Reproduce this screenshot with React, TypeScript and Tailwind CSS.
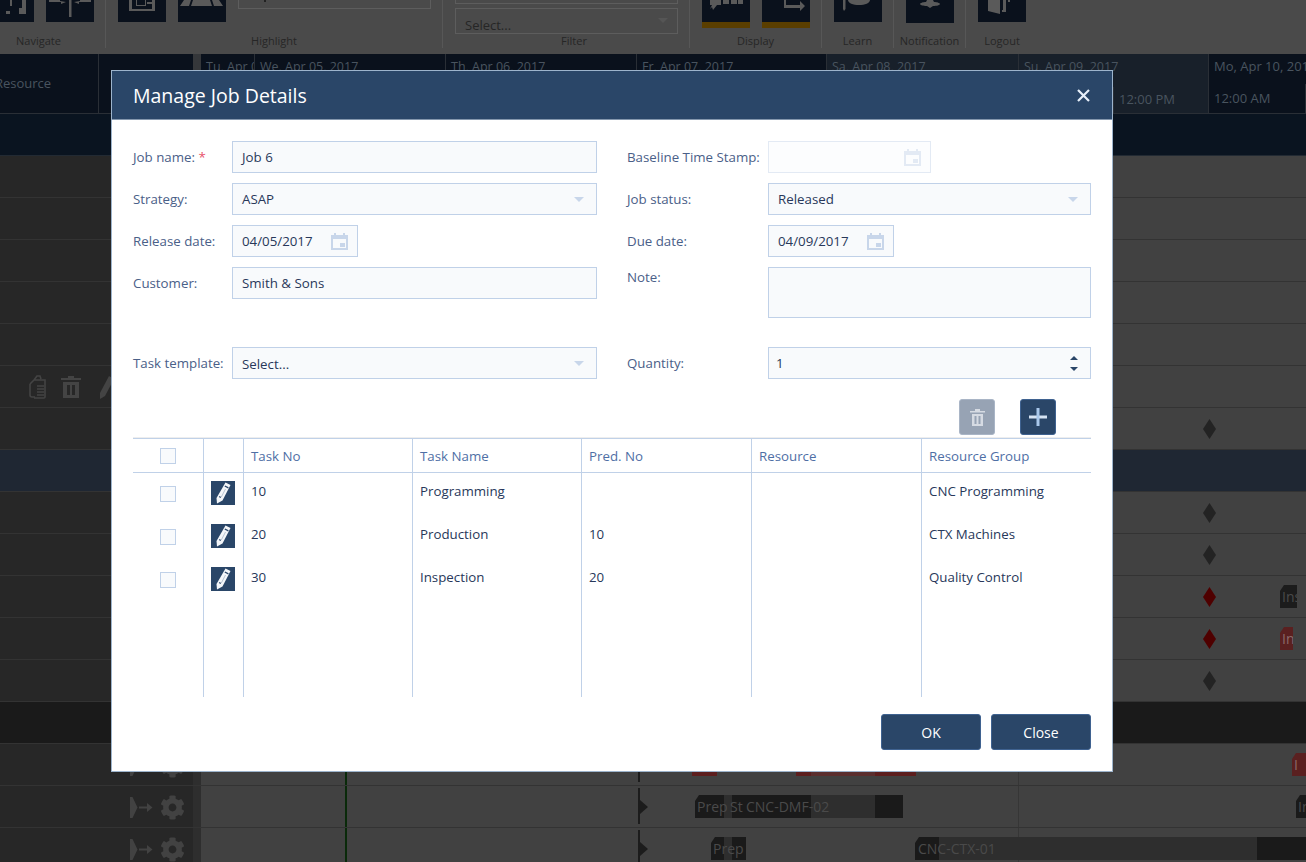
import type { ReactNode } from 'react'
import { FaCog } from 'react-icons/fa'

const HEADER_DAYS = [
	{ label: 'Tu, Apr 04, 2017', w: 'w-[54px]', bg: 'bg-[#0a111c]' },
	{ label: 'We, Apr 05, 2017', w: 'w-[191px]', bg: 'bg-[#0a111c]' },
	{ label: 'Th, Apr 06, 2017', w: 'w-[191px]', bg: 'bg-[#0a111c]' },
	{ label: 'Fr, Apr 07, 2017', w: 'w-[190px]', bg: 'bg-[#0a111c]' },
	{ label: 'Sa, Apr 08, 2017', w: 'w-[192px]', bg: 'bg-[#18202a]' },
]

const TASKS = [
	{ no: '10', name: 'Programming', pred: '', group: 'CNC Programming' },
	{ no: '20', name: 'Production', pred: '10', group: 'CTX Machines' },
	{ no: '30', name: 'Inspection', pred: '20', group: 'Quality Control' },
]

function ToolButton({ children, amber }: { children?: ReactNode; amber?: boolean }) {
	return (
		<div className="w-[48px] shrink-0">
			<div className="h-[22px] bg-[#0a111c] overflow-hidden">{children}</div>
			{amber && <div className="h-[6px] bg-[#5a3e00]" />}
		</div>
	)
}

function ToolGroup({ label, className, labelClass = '', children }: { label: string; className: string; labelClass?: string; children?: ReactNode }) {
	return (
		<div className={`h-[48px] shrink-0 flex flex-col border-r border-[#575757] ${className}`}>
			<div className="h-[34px] overflow-hidden">{children}</div>
			<div className={`text-center text-[11px] leading-[13px] text-[#262626] ${labelClass}`}>{label}</div>
		</div>
	)
}

function Toolbar() {
	return (
		<div className="h-[54px] bg-[#4a4a4a] flex overflow-hidden">
			<ToolGroup label="Navigate" className="w-[106px]" labelClass="pr-[28px]">
				<div className="flex gap-[12px] ml-[-14px]">
					<ToolButton>
						<svg width="48" height="22" viewBox="0 0 48 22" fill="#5a5a5a">
							<path d="M24 0h2v6h-2zM33 8h3V0h4v14h-7zM20 11h4v3h-4z" />
						</svg>
					</ToolButton>
					<ToolButton>
						<svg width="48" height="22" viewBox="0 0 48 22" fill="#5a5a5a">
							<path d="M23 0h2.5v17H23zM3 0h11v1l6 1-5 2v-2H3zM45 0H34v1l-6 1 5 2v-2h12z" />
						</svg>
					</ToolButton>
				</div>
			</ToolGroup>
			<ToolGroup label="Highlight" className="w-[337px]">
				<div className="flex pl-[12px] gap-[12px]">
					<ToolButton>
						<svg width="48" height="22" viewBox="0 0 48 22" fill="#5a5a5a">
							<path d="M11 0h3v9h20V0h3v11H11zM18 0h1v5h8V0h1v6H18z" />
							<path d="M29 2h5v2h-5z" />
						</svg>
					</ToolButton>
					<ToolButton>
						<svg width="48" height="22" viewBox="0 0 48 22" fill="#5a5a5a">
							<path d="M2 6l4-6h7l-2 6zM13 6l2-6h17l2 6zM36 6l-2-6h7l4 6z" />
						</svg>
					</ToolButton>
					<div className="relative h-[9px] w-[193px] border border-[#5d5d5d] border-t-0">
						<div className="absolute left-[25px] top-0 w-[2px] h-[2px] bg-[#222]" />
					</div>
				</div>
			</ToolGroup>
			<ToolGroup label="Filter" className="w-[247px]" labelClass="pl-[16px]">
				<div className="ml-[12px] w-[223px]">
					<div className="h-[4px] border border-t-0 border-[#5d5d5d]" />
					<div className="mt-[4px] h-[26px] border border-[#5d5d5d] flex items-start justify-between pl-[9px] pr-[9px] text-[13px] leading-[32px] text-[#262626]">
						Select...
						<span className="mt-[9px] w-0 h-0 border-x-[5px] border-x-transparent border-t-[5px] border-t-[#555]" />
					</div>
				</div>
			</ToolGroup>
			<ToolGroup label="Display" className="w-[132px]">
				<div className="flex gap-[12px] pl-[12px]">
					<ToolButton amber>
						<svg width="48" height="22" viewBox="0 0 48 22" fill="#5a5a5a">
							<path d="M8 0h11v5h-4l-4 5-1-3-2 2 2-4H8zM21 0h6v4h-6zM29 0h6v4h-6zM36 0h5v4h-5z" />
						</svg>
					</ToolButton>
					<ToolButton amber>
						<svg width="48" height="22" viewBox="0 0 48 22" fill="#5a5a5a">
							<path d="M22 0h2v5h14V1l5 5-5 5V8H22z" />
						</svg>
					</ToolButton>
				</div>
			</ToolGroup>
			<ToolGroup label="Learn" className="w-[72px]">
				<div className="pl-[12px]">
					<ToolButton>
						<svg width="48" height="22" viewBox="0 0 48 22" fill="#5a5a5a">
							<path d="M14 0h22c0 3-5 5-11 5S14 3 14 0zM9 0h2.5v9L10 11 9 9z" />
						</svg>
					</ToolButton>
				</div>
			</ToolGroup>
			<ToolGroup label="Notification" className="w-[72px]">
				<div className="pl-[12px]">
					<div className="w-[48px] h-[23px] bg-[#0a111c]">
						<svg width="48" height="12" viewBox="0 0 48 12" fill="#5a5a5a">
							<path d="M21 0h6l1 2c3 0 6 1 6 2s-3 2-7 2l-3 2-3-2c-4 0-7-1-7-2s3-2 6-2z" />
						</svg>
					</div>
				</div>
			</ToolGroup>
			<div className="w-[72px] shrink-0 h-[48px] flex flex-col">
				<div className="h-[34px] pl-[12px] overflow-hidden">
					<ToolButton>
						<svg width="48" height="22" viewBox="0 0 48 22" fill="#5a5a5a">
							<path d="M10 0h12v14l-12-3zM25 0h3v12h-4v-2h1zM30 0h2v2h-2z" />
						</svg>
					</ToolButton>
				</div>
				<div className="text-center text-[11px] leading-[13px] text-[#262626]">Logout</div>
			</div>
		</div>
	)
}

function TimeHeader() {
	return (
		<div className="h-[60px] flex bg-[#0a111c] border-b border-[#2a2f36] text-[#49545f] text-[13px]">
			<div className="w-[99px] shrink-0 border-r border-[#2a2f36] flex items-center overflow-hidden">
				<span className="ml-[-5px]">Resource</span>
			</div>
			<div className="w-[94px] shrink-0" />
			<div className="w-[8px] shrink-0 bg-[#35373a]" />
			{HEADER_DAYS.map((d) => (
				<div key={d.label} className={`${d.w} ${d.bg} shrink-0 overflow-hidden whitespace-nowrap text-[12.5px] pl-[5px] pt-[4px] border-r border-[#2a2f36]`}>
					{d.label}
				</div>
			))}
			<div className="w-[190px] shrink-0 bg-[#18202a] overflow-hidden whitespace-nowrap text-[12.5px] pt-[4px] border-r border-[#2a2f36]">
				<div className="pl-[5px]">Su, Apr 09, 2017</div>
				<div className="ml-[94px] mt-[10px] h-[29px] pl-[5px] pt-[3px] text-[13px] border-l border-[#2a2f36]">12:00 PM</div>
			</div>
			<div className="flex-1 overflow-hidden whitespace-nowrap pl-[5px] pt-[3px] relative">
				Mo, Apr 10, 2017
				<div className="mt-[12px]">12:00 AM</div>
				<div className="absolute right-0 bottom-0 h-[29px] w-[1px] bg-[#2a2f36]" />
			</div>
		</div>
	)
}

function Diamond({ red }: { red?: boolean }) {
	return (
		<svg className="absolute left-[1002px] top-[11px]" width="13" height="20" viewBox="0 0 13 20" fill={red ? '#4f0000' : '#232323'}>
			<path d="M6.5 0L13 10 6.5 20 0 10z" />
		</svg>
	)
}

function Marker() {
	return (
		<svg className="absolute left-[436px] top-[2px]" width="12" height="36" viewBox="0 0 12 36" fill="#1c1c1c">
			<path d="M1 0h2v12l8 7-8 7v10H1z" />
		</svg>
	)
}

function LinkIcons() {
	return (
		<div className="absolute left-[130px] top-[9px] flex items-center gap-[7px] text-[#424242]">
			<svg width="23" height="21" viewBox="0 0 23 21" fill="currentColor">
				<path d="M0 0h2.5l5 10.5-5 10.5H0zM9 9.5h8V6l5.5 4.5L17 15v-3.5H9z" />
			</svg>
			<FaCog size={25} />
		</div>
	)
}

function Row({ left, children, selected, band }: { left?: ReactNode; children?: ReactNode; selected?: boolean; band?: boolean }) {
	if (band) {
		return <div className="h-[42px] bg-[#1a1a1a] border-b border-[#333]" />
	}
	return (
		<div className={`h-[42px] flex border-b ${selected ? 'bg-[#1f2733] border-[#333]' : 'border-[#333]'}`}>
			<div className={`w-[193px] shrink-0 relative ${selected ? '' : 'bg-[#272727]'}`}>{left}</div>
			<div className={`w-[8px] shrink-0 ${selected ? '' : 'bg-[#2e2e2e]'}`} />
			<div className={`flex-1 relative overflow-hidden ${selected ? '' : 'bg-[#414141]'}`}>{children}</div>
		</div>
	)
}

function Bar({ className, text, textClass }: { className: string; text?: string; textClass?: string }) {
	return (
		<div className={`absolute h-[23px] overflow-hidden whitespace-nowrap text-[14px] leading-[23px] pl-[2px] [clip-path:polygon(4px_0,100%_0,100%_100%,0_100%,0_6px)] ${className}`}>
			<span className={textClass ?? 'text-[#4a4a4a]'}>{text}</span>
		</div>
	)
}

function ScheduleBackground() {
	const vline = <div className="absolute left-[144px] inset-y-0 w-[2px] bg-[#0a2a0a]" />
	const dayLine = <div className="absolute left-[817px] inset-y-0 w-[1px] bg-[#363636]" />

	return (
		<div>
			<div className="h-[42px] bg-[#0a1420] border-b border-[#222a33]" />
			<Row />
			<Row />
			<Row />
			<Row />
			<Row />
			<Row
				left={
					<div className="absolute left-[28px] top-[9px] flex items-center text-[#444]">
						<svg width="18" height="24" viewBox="0 0 18 24" fill="none" stroke="currentColor" strokeWidth="1.6">
							<path d="M6 5l3-4h3l1 3M2 9l4-4h6l5 0v17a1 1 0 0 1-1 1H6" />
							<path d="M2 9v11a2 2 0 0 0 2 2h3M9 11h7M9 14h7M9 17h7M9 20h7" />
						</svg>
						<svg className="ml-[15px]" width="20" height="24" viewBox="0 0 20 24" fill="currentColor">
							<path d="M0 3h7V1h6v2h7v2H0zM2 7h16v16H2zM6 10v10h3V10zM11 10v10h3V10z" />
						</svg>
						<svg className="ml-[19px]" width="14" height="24" viewBox="0 0 14 24" fill="currentColor">
							<path d="M9 1l5 3-9 17-5 3 0-6z" />
						</svg>
					</div>
				}
			/>
			<Row><Diamond /></Row>
			<Row selected />
			<Row><Diamond /></Row>
			<Row><Diamond /></Row>
			<Row>
				<Diamond red />
				<Bar className="left-[1079px] top-[9px] w-[17px] bg-[#1c1c1c]" text="Ins" />
			</Row>
			<Row>
				<Diamond red />
				<Bar className="left-[1079px] top-[9px] w-[13px] bg-[#5a2020]" text="In" textClass="text-[#8a6a6a]" />
			</Row>
			<Row><Diamond /></Row>
			<Row band />
			<Row left={<LinkIcons />}>
				{vline}
				{dayLine}
				<Marker />
				<Bar className="left-[491px] top-[9px] w-[25px] bg-[#5c1e1e]" />
				<div className="absolute left-[595px] top-[9px] w-[120px] h-[23px] bg-[#5c1e1e]">
					<div className="ml-[15px] w-[64px] h-full bg-[#5a2e2e]" />
				</div>
				<Bar className="left-[1091px] top-[9px] w-[20px] bg-[#5a2020]" text="I" textClass="text-[#8a6a6a]" />
			</Row>
			<Row left={<LinkIcons />}>
				{vline}
				{dayLine}
				<Marker />
				<div className="absolute left-[494px] top-[9px] w-[208px] h-[23px] bg-[#1a1a1a] [clip-path:polygon(4px_0,100%_0,100%_100%,0_100%,0_6px)]">
					<div className="absolute left-[29px] w-[8px] h-full bg-[#2e2e2e]" />
					<div className="absolute left-[116px] w-[64px] h-full bg-[#2e2e2e]" />
					<span className="absolute left-[2px] text-[14px] leading-[23px] text-[#4a4a4a]">Prep</span>
					<span className="absolute left-[35px] text-[14px] leading-[23px] text-[#4a4a4a]">St</span>
					<span className="absolute left-[51px] text-[14px] leading-[23px] text-[#4a4a4a]">CNC-DMF-02</span>
				</div>
				<Bar className="left-[1095px] top-[9px] w-[15px] bg-[#1a1a1a]" text="In" />
			</Row>
			<Row left={<LinkIcons />}>
				{vline}
				{dayLine}
				<Marker />
				<div className="absolute left-[510px] top-[9px] w-[35px] h-[23px] bg-[#1a1a1a] [clip-path:polygon(4px_0,100%_0,100%_100%,0_100%,0_6px)]">
					<div className="absolute left-[13px] w-[8px] h-full bg-[#2e2e2e]" />
					<span className="absolute left-[2px] text-[14px] leading-[23px] text-[#4a4a4a]">Prep</span>
				</div>
				<div className="absolute left-[714px] top-[9px] w-[391px] h-[23px] bg-[#1a1a1a] [clip-path:polygon(4px_0,100%_0,100%_100%,0_100%,0_6px)]">
					<div className="absolute left-[24px] w-[318px] h-full bg-[#2e2e2e]" />
					<span className="absolute left-[3px] text-[14px] leading-[23px] text-[#4a4a4a]">CNC-CTX-01</span>
				</div>
			</Row>
		</div>
	)
}

function CalendarIcon({ faded }: { faded?: boolean }) {
	return (
		<svg width="17" height="17" viewBox="0 0 17 17" fill={faded ? '#e3eaf4' : '#c8d6ea'}>
			<path d="M3 0h2v2h7V0h2v2h3v15H0V2h3zM2 6v9h13V6zM9 10h5v4H9z" />
		</svg>
	)
}

function Field({ children, className = 'w-full', faded }: { children?: ReactNode; className?: string; faded?: boolean }) {
	return (
		<div className={`h-[32px] border flex items-center justify-between pl-[9px] pt-[1px] text-[#28385a] ${faded ? 'border-[#e3eaf4] bg-[#fcfdfe]' : 'border-[#c0d1e8] bg-[#f8fafc]'} ${className}`}>
			{children}
		</div>
	)
}

function Caret() {
	return <span className="w-0 h-0 mr-[12px] border-x-[5px] border-x-transparent border-t-[5px] border-t-[#c8d6ea]" />
}

function FormRow({ label, width, children }: { label: ReactNode; width: string; children: ReactNode }) {
	return (
		<div className="flex items-start">
			<div className={`${width} shrink-0 h-[32px] leading-[32px] text-[#4a6088] whitespace-nowrap`}>{label}</div>
			<div className="flex-1">{children}</div>
		</div>
	)
}

function PencilButton() {
	return (
		<div className="w-[24px] h-[24px] bg-[#2a4668] flex items-center justify-center">
			<svg width="16" height="22" viewBox="0 0 16 22">
				<path d="M10.5 0.5l5 2.5-8 15.5L2 21.5l-.5-5.5z" fill="#f4f6f9" />
				<path d="M9.8 4l3.6 1.9M4.2 14.5l1.6 1" stroke="#2a4668" strokeWidth="1.3" fill="none" />
				<path d="M10.5 7L6.3 15" stroke="#aab8c8" strokeWidth="0.8" fill="none" />
			</svg>
		</div>
	)
}

function JobDialog() {
	const th = 'h-[34px] font-normal text-left pl-[7px] pt-[2px] text-[#4f6fa5] border-b border-r border-[#c0d1e8]'
	const td = 'h-[43px] align-top pl-[7px] pt-[9px] leading-[19px] text-[#28385a] border-r border-[#c0d1e8]'

	return (
		<div className="absolute left-[111px] top-[70px] w-[1002px] h-[702px] bg-white border border-[#9db4cc] flex flex-col">
			<div className="h-[49px] shrink-0 bg-[#2a4668] flex items-center justify-between pl-[21px] pr-[22px] pt-[2px] border-b border-[#8497ad]">
				<span className="text-[19.5px] text-white">Manage Job Details</span>
				<svg className="mt-[-1px]" width="13" height="13" viewBox="0 0 13 13" stroke="#e8f0fa" strokeWidth="2.2">
					<path d="M1 1l11 11M12 1L1 12" />
				</svg>
			</div>
			<div className="flex-1 px-[21px] pt-[21px] text-[13.3px]">
				<div className="grid grid-cols-2 gap-x-[30px] gap-y-[10px] grid-rows-[32px_32px_32px_51px_32px]">
					<FormRow label={<>Job name: <span className="text-[#e8506a]">*</span></>} width="w-[99px]">
						<Field>Job 6</Field>
					</FormRow>
					<FormRow label="Baseline Time Stamp:" width="w-[141px]">
						<Field className="w-[163px] pr-[9px]" faded><span /><CalendarIcon faded /></Field>
					</FormRow>
					<FormRow label="Strategy:" width="w-[99px]">
						<Field>ASAP<Caret /></Field>
					</FormRow>
					<FormRow label="Job status:" width="w-[141px]">
						<Field>Released<Caret /></Field>
					</FormRow>
					<FormRow label="Release date:" width="w-[99px]">
						<Field className="w-[126px] pr-[9px]">04/05/2017<CalendarIcon /></Field>
					</FormRow>
					<FormRow label="Due date:" width="w-[141px]">
						<Field className="w-[126px] pr-[9px]">04/09/2017<CalendarIcon /></Field>
					</FormRow>
					<FormRow label="Customer:" width="w-[99px]">
						<Field>Smith &amp; Sons</Field>
					</FormRow>
					<div className="flex items-start">
						<div className="w-[141px] shrink-0 leading-[20px] text-[#4a6088]">Note:</div>
						<div className="flex-1 h-[51px] border border-[#c0d1e8] bg-[#f8fafc]" />
					</div>
					<div className="mt-[19px]">
						<FormRow label="Task template:" width="w-[99px]">
							<Field><span className="pt-[3px]">Select...</span><Caret /></Field>
						</FormRow>
					</div>
					<div className="mt-[19px]">
						<FormRow label="Quantity:" width="w-[141px]">
							<Field>
								<span className="ml-[-2px]">1</span>
								<span className="flex flex-col gap-[7px] mr-[12px]">
									<span className="w-0 h-0 border-x-[4px] border-x-transparent border-b-[4px] border-b-[#2a4668]" />
									<span className="w-0 h-0 border-x-[4px] border-x-transparent border-t-[4px] border-t-[#2a4668]" />
								</span>
							</Field>
						</FormRow>
					</div>
				</div>
				<div className="mt-[39px] flex justify-end gap-[25px] pr-[35px]">
					<div className="w-[36px] h-[36px] rounded-[3px] bg-[#97a3b4] border border-[#a9b5c6] flex items-center justify-center">
						<svg width="15" height="17" viewBox="0 0 15 17" fill="#d6dbe3">
							<path d="M0 2h5V0h5v2h5v1.5H0zM2 5h11v12H2zM4.5 7v8h2V7zM8.5 7v8h2V7z" />
						</svg>
					</div>
					<div className="w-[36px] h-[36px] rounded-[3px] bg-[#2a4668] border border-[#3f6290] flex items-center justify-center">
						<svg width="18" height="18" viewBox="0 0 18 18">
							<path d="M0 7.5h18v3H0z" fill="#d5e3f3" />
							<path d="M7.5 0h3v18h-3z" fill="#a9c8ec" />
						</svg>
					</div>
				</div>
				<table className="mt-[3px] w-[958px] table-fixed border-separate border-spacing-0 border-t border-[#c0d1e8] shadow-[0_-1px_0_#eeeeee]">
					<colgroup>
						<col className="w-[71px]" />
						<col className="w-[40px]" />
						<col className="w-[169px]" />
						<col className="w-[169px]" />
						<col className="w-[170px]" />
						<col className="w-[170px]" />
						<col className="w-[169px]" />
					</colgroup>
					<thead>
						<tr>
							<th className="h-[34px] border-b border-r border-[#c0d1e8]">
								<div className="w-[16px] h-[16px] ml-[27px] border border-[#c0d1e8] bg-[#f8fafc]" />
							</th>
							<th className="h-[34px] border-b border-r border-[#c0d1e8]" />
							<th className={th}>Task No</th>
							<th className={th}>Task Name</th>
							<th className={th}>Pred. No</th>
							<th className={th}>Resource</th>
							<th className="h-[34px] font-normal text-left pl-[7px] pt-[2px] text-[#4f6fa5] border-b border-[#c0d1e8]">Resource Group</th>
						</tr>
					</thead>
					<tbody>
						{TASKS.map((t) => (
							<tr key={t.no}>
								<td className="h-[43px] align-top pt-[13px] border-r border-[#c0d1e8]">
									<div className="w-[16px] h-[16px] ml-[27px] border border-[#c0d1e8] bg-[#f8fafc]" />
								</td>
								<td className="h-[43px] align-top pt-[8px] pl-[7px] border-r border-[#c0d1e8]">
									<PencilButton />
								</td>
								<td className={td}>{t.no}</td>
								<td className={td}>{t.name}</td>
								<td className={td}>{t.pred}</td>
								<td className={td}></td>
								<td className="h-[43px] align-top pl-[7px] pt-[9px] leading-[19px] text-[#28385a]">{t.group}</td>
							</tr>
						))}
						<tr>
							<td className="h-[95px] border-r border-[#c0d1e8]" />
							<td className="border-r border-[#c0d1e8]" />
							<td className="border-r border-[#c0d1e8]" />
							<td className="border-r border-[#c0d1e8]" />
							<td className="border-r border-[#c0d1e8]" />
							<td className="border-r border-[#c0d1e8]" />
							<td />
						</tr>
					</tbody>
				</table>
				<div className="mt-[17px] flex justify-end gap-[10px]">
					<button className="w-[100px] h-[36px] rounded-[3px] bg-[#2a4668] border border-[#3f6290] text-white text-[14px]">OK</button>
					<button className="w-[100px] h-[36px] rounded-[3px] bg-[#2a4668] border border-[#3f6290] text-white text-[14px]">Close</button>
				</div>
			</div>
		</div>
	)
}

export default function App() {
	return (
		<div className="relative w-[1306px] h-[862px] overflow-hidden bg-[#414141] font-['Open_Sans',sans-serif]">
			<Toolbar />
			<TimeHeader />
			<ScheduleBackground />
			<JobDialog />
		</div>
	)
}
